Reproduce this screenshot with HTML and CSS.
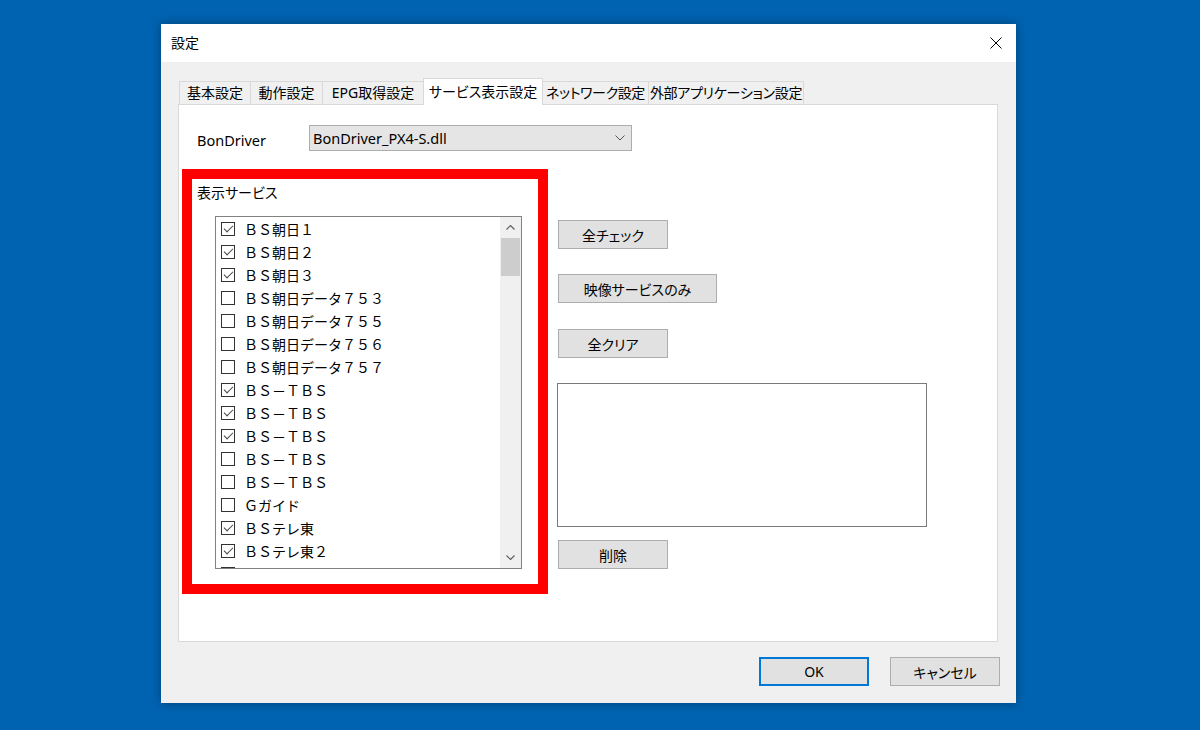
FILE: index.html
```html
<!DOCTYPE html>
<html lang="ja">

<head>
    <meta charset="UTF-8">
    <meta name="viewport" content="width=device-width, initial-scale=1.0">
    <title>設定</title>

    <link rel="stylesheet" href="styles.css">
</head>

<body>
    <div class="dialog">
        <div class="titlebar">
            <span class="title">設定</span>
            <svg class="close" viewBox="0 0 12 12" width="12" height="12">
                <path d="M0.5 0.5 L11.5 11.5 M11.5 0.5 L0.5 11.5" stroke="#000" stroke-width="1" fill="none"></path>
            </svg>
        </div>

        <div class="content">
            <div class="tabs">
                <div class="tab t1">基本設定</div>
                <div class="tab t2">動作設定</div>
                <div class="tab t3">EPG取得設定</div>
                <div class="tab t4 active">サービス表示設定</div>
                <div class="tab t5">ネットワーク設定</div>
                <div class="tab t6">外部アプリケーション設定</div>
            </div>

            <div class="panel">
                <div class="driver-row">
                    <span class="driver-label">BonDriver</span>
                    <div class="combo">
                        <span>BonDriver_PX4-S.dll</span>
                        <svg viewBox="0 0 10 6" width="10" height="6">
                            <polyline points="0.5 0.5 5 5 9.5 0.5" stroke="#555" stroke-width="1" fill="none"></polyline>
                        </svg>
                    </div>
                </div>

                <div class="main">
                    <div class="highlight">
                        <div class="group-label">表示サービス</div>
                        <div class="listbox">
                            <div class="items">
                                <div class="item"><span class="check on"></span>ＢＳ朝日１</div>
                                <div class="item"><span class="check on"></span>ＢＳ朝日２</div>
                                <div class="item"><span class="check on"></span>ＢＳ朝日３</div>
                                <div class="item"><span class="check"></span>ＢＳ朝日データ７５３</div>
                                <div class="item"><span class="check"></span>ＢＳ朝日データ７５５</div>
                                <div class="item"><span class="check"></span>ＢＳ朝日データ７５６</div>
                                <div class="item"><span class="check"></span>ＢＳ朝日データ７５７</div>
                                <div class="item"><span class="check on"></span>ＢＳ－ＴＢＳ</div>
                                <div class="item"><span class="check on"></span>ＢＳ－ＴＢＳ</div>
                                <div class="item"><span class="check on"></span>ＢＳ－ＴＢＳ</div>
                                <div class="item"><span class="check"></span>ＢＳ－ＴＢＳ</div>
                                <div class="item"><span class="check"></span>ＢＳ－ＴＢＳ</div>
                                <div class="item"><span class="check"></span>Ｇガイド</div>
                                <div class="item"><span class="check on"></span>ＢＳテレ東</div>
                                <div class="item"><span class="check on"></span>ＢＳテレ東２</div>
                                <div class="item"><span class="check"></span></div>
                            </div>
                            <div class="scrollbar">
                                <div class="arrow">
                                    <svg viewBox="0 0 9 5" width="9" height="5">
                                        <polyline points="0.5 4.5 4.5 0.5 8.5 4.5" stroke="#606060" stroke-width="1.2" fill="none"></polyline>
                                    </svg>
                                </div>
                                <div class="thumb"></div>
                                <div class="track"></div>
                                <div class="arrow">
                                    <svg viewBox="0 0 9 5" width="9" height="5">
                                        <polyline points="0.5 0.5 4.5 4.5 8.5 0.5" stroke="#606060" stroke-width="1.2" fill="none"></polyline>
                                    </svg>
                                </div>
                            </div>
                        </div>
                    </div>

                    <div class="side">
                        <button class="btn">全チェック</button>
                        <button class="btn wide">映像サービスのみ</button>
                        <button class="btn">全クリア</button>
                        <div class="textbox"></div>
                        <button class="btn">削除</button>
                    </div>
                </div>
            </div>

            <div class="footer">
                <button class="btn default">OK</button>
                <button class="btn">キャンセル</button>
            </div>
        </div>
    </div>
</body>

</html>
```

FILE: styles.css
```css
body {
    margin: 0;
    height: 730px;
    box-sizing: border-box;
    padding: 24px 0 0 161px;
    background: #0063b1;
    font-family: 'Noto Sans', 'Noto Sans CJK JP', sans-serif;
    font-size: 14px;
    color: #000;
    overflow: hidden;
}

.dialog {
    width: 855px;
    height: 679px;
    background: #f0f0f0;
    box-shadow: 0 0 10px rgba(0, 0, 0, .35);
}

.titlebar {
    height: 38px;
    background: #fff;
    display: flex;
    align-items: center;
    justify-content: space-between;
    padding: 0 14px 0 10px;
}

.title {
    font-size: 14px;
    line-height: 20px;
}

.content {
    padding: 16px 0 0 17px;
}

.tabs {
    display: flex;
    align-items: flex-end;
    height: 26px;
    margin-left: 1px;
}

.tab {
    box-sizing: border-box;
    height: 23px;
    border: 1px solid #d9d9d9;
    border-bottom: none;
    border-right: none;
    background: #f0f0f0;
    text-align: center;
    line-height: 22px;
    font-size: 14px;
    font-feature-settings: "palt";
    white-space: nowrap;
}

.t1 { width: 71px; }
.t2 { width: 72px; }
.t3 { width: 101px; }
.t4 { width: 120px; }
.t5 { width: 105px; letter-spacing: -0.4px; }
.t6 { width: 156px; letter-spacing: -0.3px; border-right: 1px solid #d9d9d9; }

.tab.active {
    height: 27px;
    margin-bottom: -1px;
    background: #fff;
    border-right: 1px solid #d9d9d9;
    line-height: 25px;
    position: relative;
    z-index: 1;
}

.tab.active + .tab {
    border-left: none;
}

.panel {
    box-sizing: border-box;
    width: 820px;
    height: 538px;
    background: #fff;
    border: 1px solid #d9d9d9;
    padding: 20px 0 0 3px;
}

.driver-row {
    display: flex;
    align-items: center;
    padding-left: 15px;
}

.driver-label {
    width: 112px;
    font-size: 14.5px;
    padding-top: 3px;
}

.combo {
    box-sizing: border-box;
    width: 323px;
    height: 26px;
    background: #e5e5e5;
    border: 1px solid #adadad;
    display: flex;
    align-items: center;
    justify-content: space-between;
    padding: 0 6px 0 3px;
    font-size: 14.5px;
}

.main {
    display: flex;
    margin-top: 18px;
}

.highlight {
    box-sizing: border-box;
    width: 366px;
    height: 425px;
    border: 10px solid #ff0000;
    padding: 4px 0 0 5px;
}

.group-label {
    line-height: 20px;
    margin-bottom: 13px;
    font-feature-settings: "palt";
}

.listbox {
    box-sizing: border-box;
    width: 307px;
    height: 353px;
    margin-left: 18px;
    border: 1px solid #828282;
    display: flex;
    overflow: hidden;
}

.items {
    flex: 1;
    padding-top: 0;
    overflow: hidden;
}

.item {
    height: 23px;
    display: flex;
    align-items: center;
    padding-left: 5px;
    font-family: 'Noto Sans CJK JP', sans-serif;
    font-size: 14px;
    white-space: nowrap;
}

.check {
    box-sizing: border-box;
    width: 14px;
    height: 14px;
    border: 1px solid #333;
    margin-right: 9px;
    flex-shrink: 0;
    position: relative;
}

.check.on::after {
    content: '';
    position: absolute;
    left: 3.5px;
    top: 0.5px;
    width: 4px;
    height: 8px;
    border-right: 1px solid #444;
    border-bottom: 1px solid #444;
    transform: rotate(45deg);
}

.scrollbar {
    width: 21px;
    background: #f0f0f0;
    display: flex;
    flex-direction: column;
}

.arrow {
    height: 21px;
    display: flex;
    justify-content: center;
    align-items: center;
}

.thumb {
    height: 38px;
    margin: 0 1px;
    background: #cdcdcd;
}

.track {
    flex: 1;
}

.side {
    display: flex;
    flex-direction: column;
    align-items: flex-start;
    margin-left: 10px;
    padding-top: 51px;
}

.btn {
    box-sizing: border-box;
    width: 110px;
    height: 29px;
    background: #e1e1e1;
    border: 1px solid #adadad;
    font-family: 'Noto Sans', 'Noto Sans CJK JP', sans-serif;
    font-size: 14px;
    font-feature-settings: "palt";
    color: #000;
    padding: 0;
}

.btn.wide {
    width: 159px;
}

.side .btn + .btn {
    margin-top: 25px;
}

.side .btn.wide + .btn {
    margin-top: 26px;
}

.textbox {
    box-sizing: border-box;
    width: 370px;
    height: 144px;
    margin: 25px 0 13px -1px;
    border: 1px solid #7a7a7a;
    background: #fff;
}

.footer {
    display: flex;
    justify-content: flex-end;
    gap: 21px;
    padding: 15px 16px 0 0;
}

.btn.default {
    border: 2px solid #0078d7;
}
```
